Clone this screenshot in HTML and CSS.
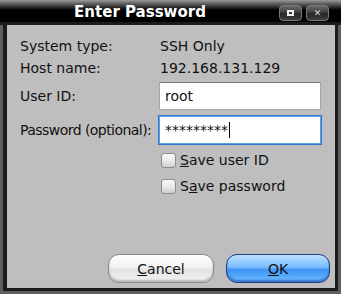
FILE: index.html
```html
<!DOCTYPE html>
<html lang="en">

<head>
    <meta charset="UTF-8">
    <meta name="viewport" content="width=device-width, initial-scale=1.0">
    <title>Enter Password</title>
    <link rel="stylesheet" href="styles.css">
</head>

<body>
    <div class="window">
        <div class="titlebar">
            <div class="title">Enter Password</div>
            <div class="tbtn"><span class="max"></span></div>
            <div class="tbtn"><span class="close">&#x2715;</span></div>
        </div>

        <div class="panel">
            <div class="row">
                <div class="label">System type:</div>
                <div class="value">SSH Only</div>
            </div>
            <div class="row">
                <div class="label">Host name:</div>
                <div class="value">192.168.131.129</div>
            </div>
            <div class="row field-row">
                <div class="label">User ID:</div>
                <div class="field">root</div>
            </div>
            <div class="row field-row pw-row">
                <div class="label tight">Password (optional):</div>
                <div class="field focus">*********<span class="caret"></span></div>
            </div>
            <div class="row check-row first">
                <span class="box"></span>
                <span><u>S</u>ave user ID</span>
            </div>
            <div class="row check-row">
                <span class="box"></span>
                <span>S<u>a</u>ve password</span>
            </div>

            <div class="actions">
                <button class="btn cancel"><u>C</u>ancel</button>
                <button class="btn ok"><u>O</u>K</button>
            </div>
        </div>
    </div>
</body>

</html>
```

FILE: styles.css
```css
* {
    margin: 0;
    padding: 0;
    box-sizing: border-box;
}

body {
    background: #3a3a3a;
    font-family: "DejaVu Sans", "Liberation Sans", sans-serif;
    font-size: 14px;
    color: #111;
}

.window {
    width: 341px;
    height: 294px;
    background: #1b1b1b;
    box-shadow: inset 0 0 0 3px #5e5e5e;
    display: flex;
    flex-direction: column;
}

.titlebar {
    height: 25px;
    display: flex;
    align-items: flex-start;
    padding: 5px 12px 0 0;
    background: linear-gradient(to bottom, #9a9a9a 0, #6a6a6a 3px, #000 10px, #000 22px, #1b1b1b 22px);
}

.title {
    flex: 1;
    text-align: center;
    color: #fff;
    font-weight: bold;
    font-size: 15px;
    line-height: 14px;
    padding-left: 5px;
}

.tbtn {
    width: 23px;
    height: 16px;
    margin-left: 4px;
    border: 1px solid #7a7a7a;
    border-radius: 4px;
    background: linear-gradient(to bottom, #6a6a6a, #3a3a3a 50%, #262626 51%, #3e3e3e);
    display: flex;
    align-items: center;
    justify-content: center;
}

.max {
    width: 7px;
    height: 6px;
    border: 2px solid #eee;
}

.close {
    color: #ddd;
    font-size: 9px;
    line-height: 9px;
}

.panel {
    flex: 1;
    margin: 0 6px 6px 7px;
    background: #bebebe;
    display: flex;
    flex-direction: column;
    padding: 10px 14px 5px 13px;
}

.row {
    display: flex;
    align-items: center;
    height: 22px;
    line-height: 22px;
}

.label {
    width: 139px;
    flex-shrink: 0;
    white-space: nowrap;
}

.label.tight {
    letter-spacing: -0.55px;
}

.value {
    padding-left: 1px;
}

.field-row {
    height: 28px;
    margin-top: 3px;
}

.pw-row {
    margin-top: 6px;
}

.field {
    width: 162px;
    flex-shrink: 0;
    height: 28px;
    background: #fff;
    border: 1px solid #a6a6a6;
    border-top-color: #7c7c7c;
    padding-left: 5px;
    line-height: 26px;
    display: flex;
    align-items: center;
}

.field.focus {
    border-color: #5b9fe6;
    box-shadow: 0 0 0 1px #2f7bd0;
}

.caret {
    width: 1px;
    height: 16px;
    background: #000;
    margin-left: 1px;
}

.check-row {
    margin-left: 141px;
    margin-top: 4px;
}

.check-row.first {
    margin-top: 5px;
}

.box {
    width: 15px;
    height: 15px;
    border: 1px solid #8c8c8c;
    border-radius: 3px;
    background: linear-gradient(to bottom, #fafafa, #e6e6e6 60%, #cfcfcf);
    margin-right: 4px;
}

.actions {
    margin-top: auto;
    display: flex;
    justify-content: flex-end;
    align-items: center;
    gap: 12px;
    margin-right: -9px;
}

.btn {
    font-family: "DejaVu Sans", "Liberation Sans", sans-serif;
    font-size: 14px;
    color: #111;
    height: 29px;
    border-radius: 11px;
}

.cancel {
    width: 106px;
    border: 1px solid #8a8a8a;
    background: linear-gradient(to bottom, #ffffff, #f2f2f2 45%, #e2e2e2 55%, #f4f4f4);
    box-shadow: inset 0 -2px 2px #b8b8b8;
}

.ok {
    width: 104px;
    border: 1px solid #1f3f86;
    background: linear-gradient(to bottom, #bfe0ff, #78bcff 45%, #3d93f5 55%, #6cc0ff);
    box-shadow: inset 0 -2px 2px #3a72c8;
}
```
